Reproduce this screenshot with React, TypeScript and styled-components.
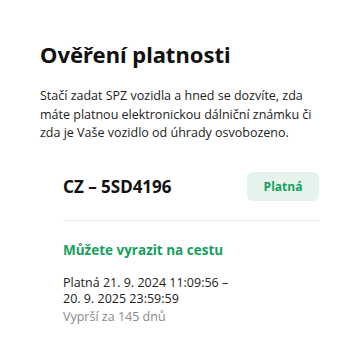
import styled, { createGlobalStyle } from 'styled-components';

const GlobalStyle = createGlobalStyle`
  html, body {
    margin: 0;
    padding: 0;
    background: #ffffff;
  }
  body {
    font-family: 'Open Sans', 'Noto Sans', sans-serif;
    color: #1f1f1f;
  }
`;

const Page = styled.div`
  padding: 39px 19px 0 40px;
`;

const Title = styled.h1`
  margin: 0 0 18px;
  font-family: 'Noto Sans', 'Open Sans', sans-serif;
  font-size: 22px;
  font-weight: 700;
  line-height: 30px;
  color: #111;
`;

const Intro = styled.p`
  margin: 0;
  font-size: 12.5px;
  line-height: 18.5px;
  color: #222;
`;

const Card = styled.div`
  margin-top: 29px;
  padding-left: 23px;
`;

const CardHeader = styled.div`
  display: flex;
  align-items: center;
  justify-content: space-between;
  padding-bottom: 19px;
  border-bottom: 1px solid #ececec;
`;

const Plate = styled.div`
  font-family: 'Noto Sans', 'Open Sans', sans-serif;
  font-size: 17px;
  font-weight: 700;
  color: #111;
`;

const Badge = styled.span`
  display: inline-flex;
  align-items: center;
  justify-content: center;
  width: 72px;
  height: 29px;
  border-radius: 6px;
  background: #e5f3ec;
  color: #15a05c;
  font-size: 12px;
  font-weight: 700;
`;

const Status = styled.div`
  margin-top: 20px;
  font-size: 13.5px;
  font-weight: 700;
  color: #15a05c;
`;

const Validity = styled.div`
  margin-top: 16px;
  font-size: 12.5px;
  line-height: 16.5px;
  color: #222;
`;

const Expires = styled.div`
  font-size: 12.5px;
  line-height: 17px;
  color: #8a8a8a;
`;

export default function App() {
  return (
    <>
      <GlobalStyle />
      <Page>
        <Title>Ověření platnosti</Title>
        <Intro>
          Stačí zadat SPZ vozidla a hned se dozvíte, zda máte platnou
          elektronickou dálniční známku či zda je Vaše vozidlo od úhrady
          osvobozeno.
        </Intro>
        <Card>
          <CardHeader>
            <Plate>CZ – 5SD4196</Plate>
            <Badge>Platná</Badge>
          </CardHeader>
          <Status>Můžete vyrazit na cestu</Status>
          <Validity>
            Platná 21. 9. 2024 11:09:56 –
            <br />
            20. 9. 2025 23:59:59
          </Validity>
          <Expires>Vyprší za 145 dnů</Expires>
        </Card>
      </Page>
    </>
  );
}
